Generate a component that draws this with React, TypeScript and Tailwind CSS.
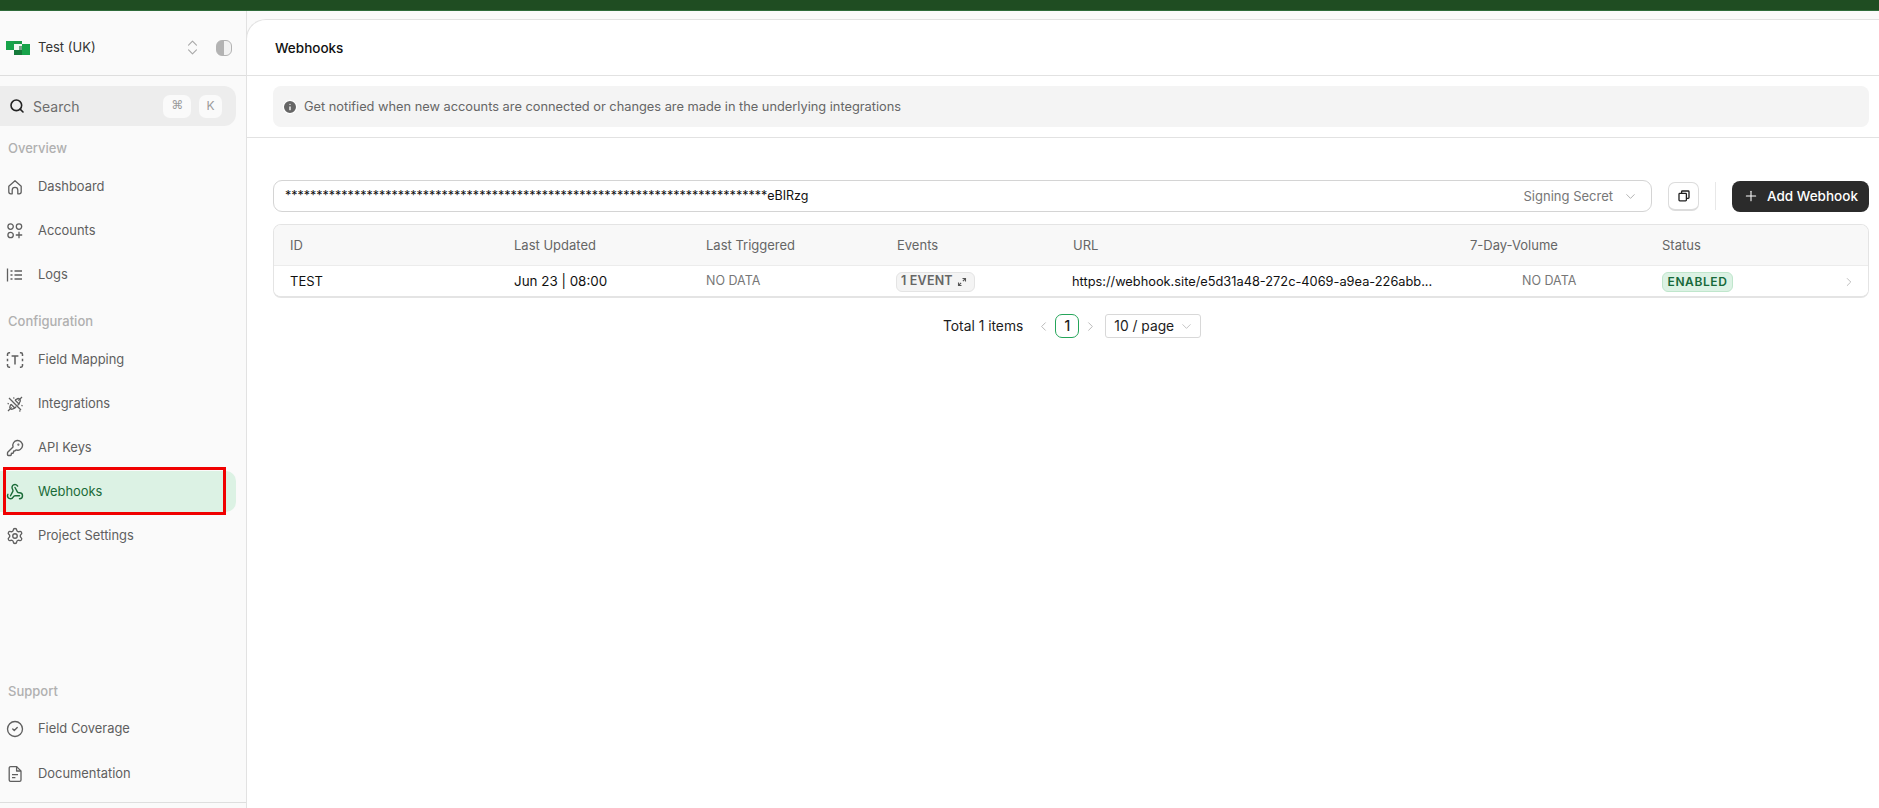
import { ChevronDown, ChevronLeft, ChevronRight, ChevronsUpDown, Info, KeyRound, Plus, Search, Settings, Webhook, CircleCheck } from "lucide-react"
import type { ReactNode } from "react"

const FONT = "font-['Inter','Noto_Sans',sans-serif]"

function HomeIcon() {
  return (
    <svg width="18" height="18" viewBox="0 0 18 18" fill="none" stroke="currentColor" strokeWidth="1.3" strokeLinejoin="round">
      <path d="M2.8 8.2 9 2.8l6.2 5.4v5.6a2 2 0 0 1-2 2h-1.4v-3.6a2.8 2.8 0 0 0-5.6 0v3.6H4.8a2 2 0 0 1-2-2z" />
    </svg>
  )
}

function AccountsIcon() {
  return (
    <svg width="18" height="18" viewBox="0 0 18 18" fill="none" stroke="currentColor" strokeWidth="1.3">
      <circle cx="4.6" cy="4.6" r="2.7" />
      <circle cx="13" cy="4.6" r="2.7" />
      <circle cx="4.6" cy="13" r="2.7" />
      <path d="M13 9.8v6.4M9.8 13h6.4" />
    </svg>
  )
}

function LogsIcon() {
  return (
    <svg width="18" height="18" viewBox="0 0 18 18" fill="none" stroke="currentColor" strokeWidth="1.3">
      <path d="M1.5 2.5v13M4.5 5h2M4.5 9h2M4.5 13h2M8.5 5H16M8.5 9H16M8.5 13H16" />
    </svg>
  )
}

function FieldIcon() {
  return (
    <svg width="18" height="18" viewBox="0 0 18 18" fill="none" stroke="currentColor" strokeWidth="1.5">
      <path d="M1.5 5V3.4a1.6 1.6 0 0 1 1.6-1.6h1M13.9 1.8h1a1.6 1.6 0 0 1 1.6 1.6V5M16.5 13v1.6a1.6 1.6 0 0 1-1.6 1.6h-1M4.1 16.2h-1a1.6 1.6 0 0 1-1.6-1.6V13M1.5 7.8v2.4M16.5 7.8v2.4M5.6 5h6.8M9 5v8.4" />
    </svg>
  )
}

function IntegrationsIcon() {
  return (
    <svg width="18" height="18" viewBox="0 0 18 18" fill="none" stroke="currentColor" strokeWidth="1.3" strokeLinejoin="round">
      <path d="m3 3 12 12M2 16l3.6-3.6M16 2l-3.6 3.6M5 9.2 8.8 13l1.4-1.4M9 5l4 4 -1.4 1.4M1.6 8.4l1.2.4M13.6 15.4l.4 1.2M7.6 2.4l.4 1.2M15.4 10.4l1.2.4" />
      <path d="M5 9.2 4.2 11a2 2 0 0 0 2.8 2.8l1.8-.8M9 5l1.8-.8a2 2 0 0 1 2.9 2.9L13 9" />
    </svg>
  )
}

function DocIcon() {
  return (
    <svg width="18" height="18" viewBox="0 0 18 18" fill="none" stroke="currentColor" strokeWidth="1.3" strokeLinejoin="round">
      <path d="M3.2 3a1.4 1.4 0 0 1 1.4-1.4h6L15 6v9a1.4 1.4 0 0 1-1.4 1.4h-9A1.4 1.4 0 0 1 3.2 15z" />
      <path d="M10.6 1.6V6H15M6 9.6h6M6 12.6h3.4" />
    </svg>
  )
}

function CopyIcon() {
  return (
    <svg width="12" height="12" viewBox="0 0 12 12" fill="none" stroke="#1f1f1f" strokeWidth="1.3">
      <rect x="1" y="3.4" width="7.4" height="7.4" rx="0.8" />
      <path d="M3.6 3.4V1.8a.8.8 0 0 1 .8-.8h5.8a.8.8 0 0 1 .8.8v5.8a.8.8 0 0 1-.8.8H8.4" />
    </svg>
  )
}

function ExpandIcon() {
  return (
    <svg width="10" height="10" viewBox="0 0 10 10" fill="none" stroke="#555" strokeWidth="1.1">
      <path d="M1.5 5.5v3h3M8.5 4.5v-3h-3M1.5 8.5l2.6-2.6M8.5 1.5 5.9 4.1" />
    </svg>
  )
}

function Logo() {
  return (
    <svg width="24" height="14" viewBox="0 0 24 14">
      <path d="M0 0h8v9H0z" fill="#17a34a" />
      <path d="M8 0h8v3H8z" fill="#1c9a48" />
      <path d="M8 3h8v6H8z" fill="#f2f7f3" />
      <path d="M8 9h8v5H8z" fill="#157a3a" />
      <path d="M16 3h8v11h-8z" fill="#17a34a" />
      <path d="M13 5h3v4h-3z" fill="#0f5b2b" opacity="0.55" />
    </svg>
  )
}

function NavItem({ icon, label, active }: { icon: ReactNode; label: string; active?: boolean }) {
  return (
    <div
      className={
        active
          ? "flex h-[41px] items-center rounded-r-[10px] bg-[#dcf2e4] pl-[6px] text-[#1a6b38] mr-[10px]"
          : "flex h-[41px] items-center pl-[6px] text-[#5f5f5f] mr-[10px]"
      }
    >
      <span className="flex w-[32px] shrink-0">{icon}</span>
      <span className="text-[12.9px]">{label}</span>
    </div>
  )
}

function SectionLabel({ children }: { children: ReactNode }) {
  return <div className="pl-[8px] text-[13px] font-medium leading-[16px] text-[#b0b0b0]">{children}</div>
}

function Sidebar() {
  return (
    <aside className="relative flex w-[247px] shrink-0 flex-col border-r border-[#e2e2e2] bg-[#fafafa] pb-[5px]">
      <div className="flex h-[65px] shrink-0 items-center border-b border-[#dedede] pl-[6px] pr-[14px] pt-[9px]">
        <Logo />
        <span className="ml-[8px] text-[13px] text-[#333]">Test (UK)</span>
        <ChevronsUpDown className="ml-auto h-[19px] w-[19px] text-[#a8a8a8]" strokeWidth={1.4} />
        <span className="ml-[14px] h-[16px] w-[16px] rounded-[6px] border-[1.5px] border-[#b3b3b3] bg-[linear-gradient(90deg,#b3b3b3_50%,#f2f2f2_50%)]" />
      </div>

      <div className="mr-[10px] mt-[10px] flex h-[40px] shrink-0 items-center rounded-r-[12px] bg-[#ededed] pl-[9px] pr-[14px]">
        <Search className="h-[16px] w-[16px] text-[#222]" strokeWidth={2.4} />
        <span className="ml-[8px] text-[14px] text-[#6d6d6d]">Search</span>
        <kbd className="ml-auto flex h-[23px] w-[28px] items-center justify-center rounded-[7px] bg-[#fafafa] text-[17px] leading-none text-[#9a9a9a]">⌘</kbd>
        <kbd className="ml-[8px] flex h-[23px] w-[23px] items-center justify-center rounded-[7px] bg-[#fafafa] font-['Inter'] text-[12px] text-[#9a9a9a]">K</kbd>
      </div>

      <div className="mt-[14px]">
        <SectionLabel>Overview</SectionLabel>
      </div>
      <div className="mt-[10px] flex flex-col gap-[3px]">
        <NavItem icon={<HomeIcon />} label="Dashboard" />
        <NavItem icon={<AccountsIcon />} label="Accounts" />
        <NavItem icon={<LogsIcon />} label="Logs" />
      </div>

      <div className="mt-[18px]">
        <SectionLabel>Configuration</SectionLabel>
      </div>
      <div className="mt-[10px] flex flex-col gap-[3px]">
        <NavItem icon={<FieldIcon />} label="Field Mapping" />
        <NavItem icon={<IntegrationsIcon />} label="Integrations" />
        <NavItem icon={<KeyRound size={18} strokeWidth={1.8} />} label="API Keys" />
        <NavItem active icon={<Webhook size={18} strokeWidth={1.9} />} label="Webhooks" />
        <NavItem icon={<Settings size={18} strokeWidth={1.8} />} label="Project Settings" />
      </div>

      <div className="mt-auto">
        <SectionLabel>Support</SectionLabel>
      </div>
      <div className="mt-[9px] flex flex-col gap-[4px] border-b border-[#dedede] pb-[8px]">
        <NavItem icon={<CircleCheck size={18} strokeWidth={1.8} />} label="Field Coverage" />
        <NavItem icon={<DocIcon />} label="Documentation" />
      </div>

      {/* annotation box drawn over the screenshot */}
      <div className="absolute left-[3px] top-[456px] h-[48px] w-[223px] border-[3px] border-[#f00000]" />
    </aside>
  )
}

const COLS = "grid grid-cols-[224px_192px_191px_176px_397px_192px_1fr_36px] items-center"

function WebhooksTable() {
  return (
    <div className="mt-[12px] overflow-hidden rounded-[8px] border border-[#e4e4e4] border-b-2">
      <div className={`${COLS} h-[41px] border-b border-[#ececec] bg-[#f8f8f8] pt-[2px] text-[13px] text-[#666]`}>
        <span className="pl-[16px]">ID</span>
        <span className="pl-[16px]">Last Updated</span>
        <span className="pl-[16px]">Last Triggered</span>
        <span className="pl-[16px]">Events</span>
        <span className="pl-[16px]">URL</span>
        <span className="pl-[16px]">7-Day-Volume</span>
        <span className="pl-[16px]">Status</span>
        <span />
      </div>
      <div className={`${COLS} h-[30px] bg-white pt-[1px] text-[13px] text-[#111]`}>
        <span className="pl-[16px]">TEST</span>
        <span className="pl-[16px] text-[13.4px]">Jun 23 | 08:00</span>
        <span className="pl-[16px] text-[12.5px] text-[#777]">NO DATA</span>
        <span className="pl-[15px]">
          <span className="inline-flex h-[20px] w-[79px] items-center gap-[4px] rounded-[6px] border border-[#e4e4e4] bg-[#f4f4f4] pl-[4px] text-[12.5px] font-semibold tracking-[0.2px] text-[#666]">
            1 EVENT <ExpandIcon />
          </span>
        </span>
        <span className="whitespace-nowrap pl-[15px] text-[12.8px]">https://webhook.site/e5d31a48-272c-4069-a9ea-226abb...</span>
        <span className="pl-[68px] text-[12.5px] text-[#777]">NO DATA</span>
        <span className="pl-[16px]">
          <span className="inline-flex h-[20px] w-[71px] items-center justify-center rounded-[6px] border border-[#bfe6cc] bg-[#dcf2e4] text-[12px] font-semibold tracking-[0.6px] text-[#17693a]">
            ENABLED
          </span>
        </span>
        <ChevronRight className="ml-[10px] h-[14px] w-[14px] text-[#aaa]" strokeWidth={1.3} />
      </div>
    </div>
  )
}

function Pagination() {
  return (
    <div className="mt-[16px] flex items-center text-[13.8px] text-[#1c1c1c]">
      <span className="ml-[670px]">Total 1 items</span>
      <ChevronLeft className="ml-[13px] h-[15px] w-[15px] text-[#aaa]" strokeWidth={1.3} />
      <span className="ml-[4px] flex h-[24px] w-[24px] items-center justify-center rounded-[7px] border border-[#25a55a] font-medium">1</span>
      <ChevronRight className="ml-[4px] h-[15px] w-[15px] text-[#aaa]" strokeWidth={1.3} />
      <span className="ml-[7px] flex h-[24px] w-[96px] items-center rounded-[3px] border border-[#d8d8d8] pl-[8px]">
        10 / page
        <ChevronDown className="ml-[5px] h-[15px] w-[15px] text-[#aaa]" strokeWidth={1.1} />
      </span>
    </div>
  )
}

export default function App() {
  return (
    <div className={`${FONT} flex h-[808px] w-[1879px] flex-col overflow-hidden bg-[#fafafa]`}>
      <div className="h-[11px] shrink-0 border-b border-[#2f6b3a] bg-[#1f4d22]" />
      <div className="flex min-h-0 flex-1">
        <Sidebar />
        <main className="-ml-[1px] mt-[8px] flex min-w-0 flex-1 flex-col rounded-tl-[20px] border-l border-t border-[#e2e2e2] bg-white">
          <div className="flex h-[56px] shrink-0 items-center border-b border-[#e2e2e2] pl-[28px] pt-[1px] text-[13.5px] font-medium text-[#111]">
            Webhooks
          </div>
          <div className="border-b border-[#e2e2e2] pb-[10px] pl-[26px] pr-[10px] pt-[10px]">
            <div className="flex h-[41px] items-center rounded-[8px] bg-[#f4f4f4] pl-[9px] pt-[1px] text-[12.8px] text-[#666]">
              <Info className="h-[16px] w-[16px] fill-[#666] text-white" strokeWidth={2} />
              <span className="ml-[6px]">Get notified when new accounts are connected or changes are made in the underlying integrations</span>
            </div>
          </div>
          <div className="pl-[26px] pr-[10px] pt-[42px]">
            <div className="flex items-center">
              <div className="flex h-[32px] flex-1 items-center rounded-[9px] border border-[#d4d4d4] pl-[11px] pr-[13px] pt-[1px] text-[12.5px] text-[#111]">
                <span>{"*".repeat(77)}eBIRzg</span>
                <span className="ml-auto text-[13px] text-[#777]">Signing Secret</span>
                <ChevronDown className="ml-[10px] h-[15px] w-[15px] text-[#999]" strokeWidth={1.2} />
              </div>
              <button className="ml-[16px] flex h-[29px] w-[31px] items-center justify-center rounded-[7px] border border-[#dcdcdc] border-b-2 bg-white">
                <CopyIcon />
              </button>
              <div className="ml-[16px] h-[28px] w-px bg-[#e8e8e8]" />
              <button className="ml-[16px] flex h-[31px] w-[137px] items-center justify-center gap-[8px] rounded-[8px] bg-[#2b2b2b] text-[13.5px] font-medium text-white">
                <Plus className="h-[16px] w-[16px]" strokeWidth={1.6} />
                Add Webhook
              </button>
            </div>
            <WebhooksTable />
            <Pagination />
          </div>
        </main>
      </div>
    </div>
  )
}
